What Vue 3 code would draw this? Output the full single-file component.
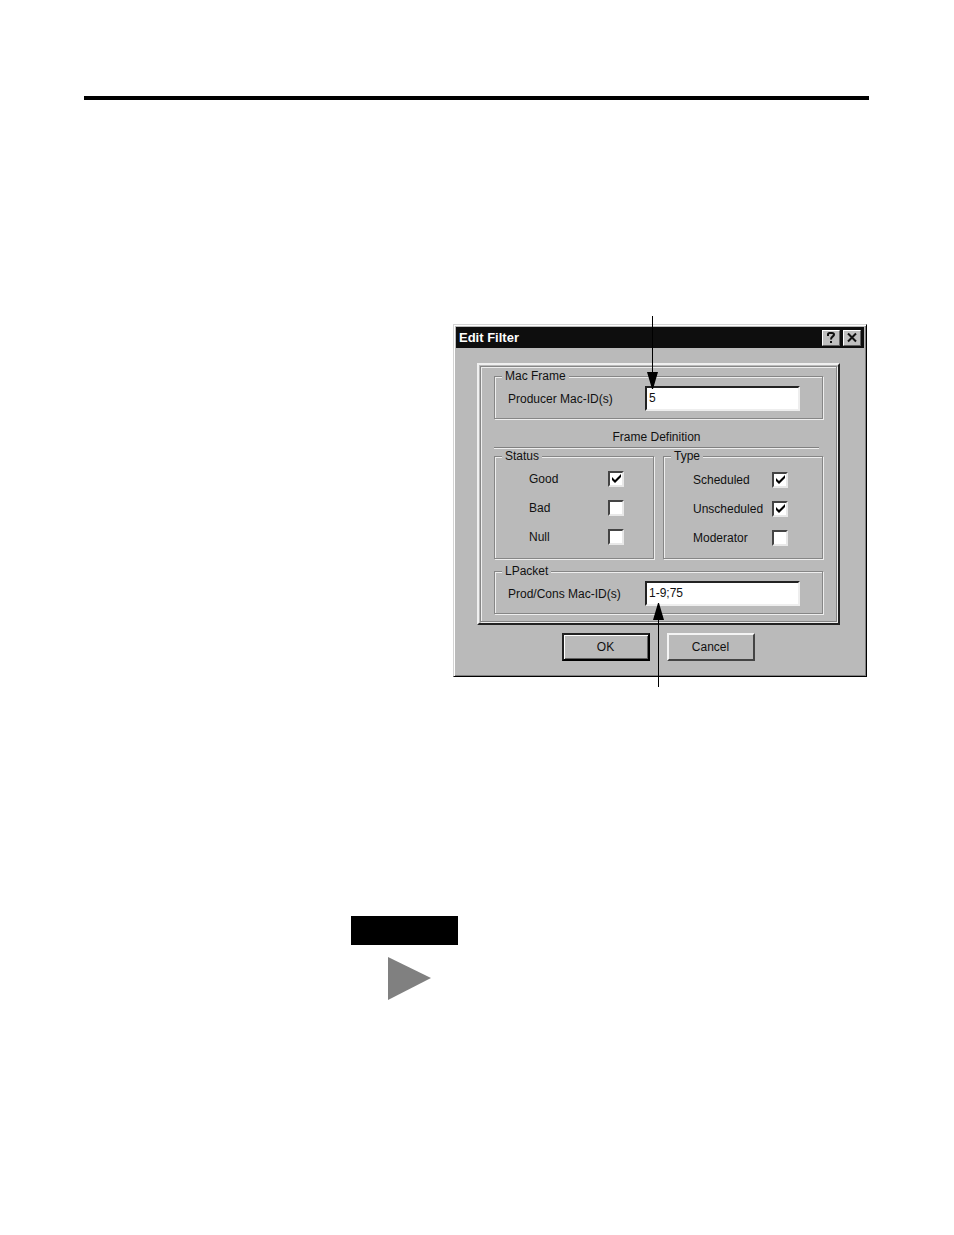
<script setup>
import { ref } from 'vue'

const producerId = ref('5')
const packetId = ref('1-9;75')

const groups = ref([
  {
    title: 'Status',
    items: [
      { id: 'good', label: 'Good', checked: true },
      { id: 'bad', label: 'Bad', checked: false },
      { id: 'null', label: 'Null', checked: false },
    ],
  },
  {
    title: 'Type',
    items: [
      { id: 'scheduled', label: 'Scheduled', checked: true },
      { id: 'unscheduled', label: 'Unscheduled', checked: true },
      { id: 'moderator', label: 'Moderator', checked: false },
    ],
  },
])
</script>

<template>
  <main class="page">
    <hr class="rule">

    <div class="figure">
      <form class="dialog" @submit.prevent>
        <header class="titlebar">
          <h1>Edit Filter</h1>
          <button type="button" class="tool" aria-label="Help">
            <svg width="10" height="11" viewBox="0 0 10 11">
              <path d="M2 4V2.500Q2 1 3.500 1h2.500Q8 1 8 2.800C8 4.500 5 4.500 5 7.500" fill="none" stroke="#111" stroke-width="2" />
              <rect x="4" y="9" width="2" height="2" fill="#111" />
            </svg>
          </button>
          <button type="button" class="tool" aria-label="Close">
            <svg width="10" height="11" viewBox="0 0 10 11">
              <path d="M1 1.500L9 9.500M9 1.500L1 9.500" fill="none" stroke="#111" stroke-width="2" />
            </svg>
          </button>
        </header>

        <div class="panel">
          <div class="sheet">
            <fieldset>
              <legend>Mac Frame</legend>
              <div class="field">
                <label for="producer">Producer Mac-ID(s)</label>
                <input id="producer" v-model="producerId" type="text">
              </div>
            </fieldset>

            <h2>Frame Definition</h2>

            <div class="groups">
              <fieldset v-for="group in groups" :key="group.title">
                <legend>{{ group.title }}</legend>
                <div v-for="item in group.items" :key="item.id" class="check">
                  <label :for="item.id">{{ item.label }}</label>
                  <span class="box">
                    <input :id="item.id" v-model="item.checked" type="checkbox">
                    <svg v-if="item.checked" class="tick" width="9" height="9" viewBox="0 0 9 9">
                      <path d="M0 3v3l3 3l6-6v-3l-6 6z" fill="#000" />
                    </svg>
                  </span>
                </div>
              </fieldset>
            </div>

            <fieldset class="packet">
              <legend>LPacket</legend>
              <div class="field">
                <label for="packet">Prod/Cons Mac-ID(s)</label>
                <input id="packet" v-model="packetId" type="text">
              </div>
            </fieldset>
          </div>
        </div>

        <div class="actions">
          <button type="submit" class="btn default">OK</button>
          <button type="button" class="btn">Cancel</button>
        </div>
      </form>

      <!-- callout arrows -->
      <svg class="arrow down" width="12" height="73" viewBox="0 0 12 73">
        <path d="M5 0h1v56h5L6 73H5L0 56h5z" />
      </svg>
      <svg class="arrow up" width="12" height="84" viewBox="0 0 12 84">
        <path d="M5 84h1V17h5L6 0H5L0 17h5z" />
      </svg>
    </div>

    <div class="note">
      <div class="bar"></div>
      <svg class="marker" width="43" height="43" viewBox="0 0 43 43">
        <path d="M0 0L43 21L0 43z" fill="#808080" />
      </svg>
    </div>
  </main>
</template>

<style>
body {
  margin: 0;
  background: #fff;
}
</style>

<style scoped>
.page {
  padding: 96px 85px 236px 84px;
  font-family: "Liberation Sans", Arial, sans-serif;
  font-size: 12px;
  line-height: 16px;
  color: #111;
}
.rule {
  height: 4px;
  margin: 0;
  border: 0;
  background: #000;
}
.figure {
  position: relative;
  margin: 224px 2px 0 369px;
}
.dialog {
  padding: 2px 2px 15px;
  border: 1px solid;
  border-color: #d4d4d4 #000 #000 #d4d4d4;
  box-shadow: inset 1px 1px #fff, inset -1px -1px #808080;
  background: #bababa;
}
.titlebar {
  display: flex;
  align-items: center;
  height: 21px;
  padding: 0 3px;
  background: #0e0e0e;
}
h1 {
  flex: 1;
  margin: 0;
  color: #fff;
  font-size: 13px;
  font-weight: 700;
}
h2 {
  margin: 10px 4px 0 0;
  padding-bottom: 2px;
  border-bottom: 1px solid #808080;
  box-shadow: 0 1px #eee;
  font-size: 12px;
  font-weight: 400;
  text-align: center;
}
.tool {
  display: flex;
  align-items: center;
  justify-content: center;
  width: 18px;
  height: 16px;
  margin-left: 3px;
  padding: 0;
  border: 1px solid;
  border-color: #fff #606060 #606060 #fff;
  background: #c0c0c0;
}
.panel {
  margin: 15px 24px 0 21px;
  padding: 1px;
  border: 2px solid;
  border-color: #f0f0f0 #222 #222 #f0f0f0;
}
.sheet {
  padding: 2px 13px 7px;
  border: 1px solid #868686;
  box-shadow: inset 1px 1px #eee, 1px 1px #eee;
}
fieldset {
  min-width: 0;
  margin: 0;
  padding: 0 0 7px;
  border: 1px solid #868686;
  box-shadow: inset 1px 1px #eee, 1px 1px #eee;
}
legend {
  height: 15px;
  margin-left: 7px;
  padding: 0 3px;
  line-height: 15px;
  background: #bababa;
}
.field {
  display: grid;
  grid-template-columns: 137px 1fr;
  align-items: center;
  margin: 2px 22px 0 13px;
}
.field input {
  box-sizing: border-box;
  width: 100%;
  min-width: 0;
  height: 25px;
  padding: 0 2px 2px;
  border: 2px solid;
  border-color: #222 #eee #eee #222;
  background: #fff;
  color: #111;
  font: inherit;
  outline: 0;
}
.groups {
  display: grid;
  grid-template-columns: 1fr 1fr;
  gap: 9px;
  margin-top: 1px;
}
.packet {
  margin-top: 5px;
}
.check {
  display: grid;
  grid-template-columns: 79px 16px;
  align-items: center;
  height: 29px;
  margin-left: 34px;
}
.groups fieldset + fieldset .check {
  margin-left: 29px;
}
.groups fieldset + fieldset .check:nth-of-type(1) {
  margin-top: 1px;
}
.box {
  position: relative;
  height: 16px;
}
.box input {
  appearance: none;
  display: block;
  box-sizing: border-box;
  width: 16px;
  height: 16px;
  margin: 0;
  border: 2px solid;
  border-color: #444 #e8e8e8 #e8e8e8 #444;
  background: #fff;
}
.groups fieldset + fieldset {
  padding-bottom: 6px;
}
.tick {
  position: absolute;
  top: 3px;
  left: 4px;
  pointer-events: none;
}
.actions {
  display: flex;
  justify-content: center;
  gap: 17px;
  margin: 8px 4px 0 0;
}
.btn {
  width: 88px;
  height: 28px;
  padding: 0;
  border: 2px solid;
  border-color: #f4f4f4 #444 #444 #f4f4f4;
  background: #bababa;
  color: #111;
  font: inherit;
}
.default {
  border-color: #222 #000 #000 #222;
  box-shadow: inset 1px 1px #fff, inset -1px -1px #606060;
}
.arrow {
  position: absolute;
  pointer-events: none;
}
.down {
  top: -8px;
  left: 194px;
}
.up {
  bottom: -10px;
  left: 200px;
}
.note {
  width: 107px;
  margin: 239px 0 0 267px;
}
.bar {
  height: 29px;
  background: #000;
}
.marker {
  display: block;
  margin: 12px 0 0 37px;
}
</style>
